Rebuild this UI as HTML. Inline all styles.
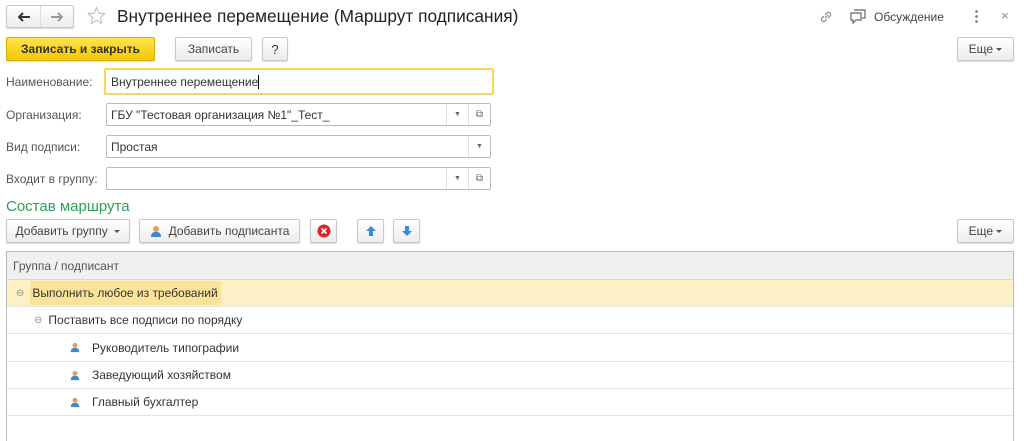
<!DOCTYPE html>
<html><head><meta charset="utf-8"><style>
*{box-sizing:border-box;margin:0;padding:0}
body{width:1024px;height:429px;background:#fff;font-family:"Liberation Sans",Arial,sans-serif;font-size:12px;color:#333;position:relative;overflow:hidden}
.a{position:absolute}
.btn{position:absolute;border:1px solid #c8c8c8;border-radius:2px;background:linear-gradient(#fff,#ececec);box-shadow:0 1px 1px rgba(0,0,0,.15);display:flex;align-items:center;justify-content:center;color:#444;font-size:12px}
.fld{position:absolute;border:1px solid #bbb;border-radius:2px;background:#fff;display:flex;align-items:center;padding-left:4px;font-size:12px;color:#333}
.lbl{position:absolute;color:#555;font-size:12px}
.dd{position:absolute;top:0;bottom:0;border-left:1px solid #ddd;width:22px;display:flex;align-items:center;justify-content:center;font-size:7px;color:#666}
.row{position:absolute;left:7px;width:1006px;border-bottom:1px solid #e4e4e4;display:flex;align-items:center;font-size:12px;color:#333}
.tri{display:inline-block;width:0;height:0;border-left:3px solid transparent;border-right:3px solid transparent;border-top:3px solid #555}
</style></head><body>
<div class="btn" style="left:6px;top:5px;width:68px;height:23px;justify-content:flex-start;padding:0">
 <span style="width:34px;display:flex;justify-content:center"><svg width="12" height="10"><path d="M1 5h11M5 1L1 5l4 4" fill="none" stroke="#333" stroke-width="2"/></svg></span><span style="width:1px;height:21px;background:#ddd"></span><span style="width:33px;display:flex;justify-content:center"><svg width="12" height="10"><path d="M0 5h11M7 1l4 4-4 4" fill="none" stroke="#999" stroke-width="2"/></svg></span>
</div>
<svg class="a" style="left:86px;top:6px" width="21" height="20" viewBox="0 0 24 24"><path d="M12 2l2.9 6.6 7.1.6-5.4 4.7 1.6 7-6.2-3.7-6.2 3.7 1.6-7L2 9.2l7.1-.6z" fill="none" stroke="#bbb" stroke-width="1.2"/></svg>
<div class="a" style="left:117px;top:6px;font-size:17.3px;color:#222">Внутреннее перемещение (Маршрут подписания)</div>
<svg class="a" style="left:818px;top:9px" width="16" height="16" viewBox="0 0 16 16"><path d="M7 9l3-3M6 7L4 9a2 2 0 003 3l2-2M10 9l2-2a2 2 0 00-3-3L7 6" fill="none" stroke="#888" stroke-width="1.2"/></svg>
<svg class="a" style="left:850px;top:9px" width="16" height="15" viewBox="0 0 16 15"><path d="M4 1h11v8h-3M1 4h10v7H6l-3 3v-3H1z" fill="none" stroke="#666" stroke-width="1.2"/></svg>
<div class="a" style="left:874px;top:10px;color:#444">Обсуждение</div>
<div class="a" style="left:975px;top:9px;width:3px;height:14px;background:radial-gradient(circle,#888 1.3px,transparent 1.5px) 0 0/3px 5px"></div>
<div class="a" style="left:1001px;top:8px;color:#888;font-size:13px">×</div>

<div class="btn" style="left:6px;top:37px;width:149px;height:24px;background:linear-gradient(#ffe34d,#f2c800);border-color:#d4ae00;color:#333;font-weight:bold">Записать и закрыть</div>
<div class="btn" style="left:175px;top:37px;width:77px;height:24px">Записать</div>
<div class="btn" style="left:262px;top:37px;width:26px;height:24px;font-size:13px;color:#333">?</div>
<div class="btn" style="left:957px;top:37px;width:57px;height:24px">Еще&nbsp;<span class="tri"></span></div>

<div class="lbl" style="left:6px;top:75px">Наименование:</div>
<div class="fld" style="left:104px;top:68px;width:390px;height:27px;border:2px solid #f5d85a;padding-left:5px">Внутреннее перемещение<span style="width:1px;height:14px;background:#000"></span></div>
<div class="lbl" style="left:6px;top:108px">Организация:</div>
<div class="fld" style="left:106px;top:103px;width:385px;height:23px">ГБУ "Тестовая организация №1"_Тест_<div class="dd" style="right:22px">▼</div><div class="dd" style="right:0;font-size:10px">⧉</div></div>
<div class="lbl" style="left:6px;top:140px">Вид подписи:</div>
<div class="fld" style="left:106px;top:135px;width:385px;height:23px">Простая<div class="dd" style="right:0">▼</div></div>
<div class="lbl" style="left:6px;top:172px">Входит в группу:</div>
<div class="fld" style="left:106px;top:167px;width:385px;height:23px"><div class="dd" style="right:22px">▼</div><div class="dd" style="right:0;font-size:10px">⧉</div></div>

<div class="a" style="left:6px;top:198px;font-size:15px;color:#2aa05a">Состав маршрута</div>
<div class="btn" style="left:6px;top:219px;width:124px;height:24px">Добавить группу&nbsp;&nbsp;<span class="tri"></span></div>
<div class="btn" style="left:139px;top:219px;width:161px;height:24px"><svg width="12" height="13" viewBox="0 0 12 13" style="margin-right:7px"><circle cx="6" cy="4" r="3" fill="#e0a060"/><path d="M1 12c0-4 2-5 5-5s5 1 5 5z" fill="#3a8ad0"/></svg>Добавить подписанта</div>
<div class="btn" style="left:310px;top:219px;width:27px;height:24px"><svg width="14" height="14"><circle cx="7" cy="7" r="6.5" fill="#d8262b"/><path d="M4.5 4.5l5 5M9.5 4.5l-5 5" stroke="#fff" stroke-width="1.6"/></svg></div>
<div class="btn" style="left:357px;top:219px;width:27px;height:24px"><svg width="12" height="12"><path d="M6 1l5 5H8v5H4V6H1z" fill="#3a8ad8"/></svg></div>
<div class="btn" style="left:393px;top:219px;width:27px;height:24px"><svg width="12" height="12"><path d="M6 11l5-5H8V1H4v5H1z" fill="#3a8ad8"/></svg></div>
<div class="btn" style="left:957px;top:219px;width:57px;height:24px">Еще&nbsp;<span class="tri"></span></div>

<div class="a" style="left:6px;top:251px;width:1008px;height:190px;border:1px solid #bbb;border-bottom:none"></div>
<div class="row" style="top:252px;height:28px;background:#f0f0f0;border-bottom:1px solid #d8d8d8;padding-left:6px;color:#555">Группа / подписант</div>
<div class="row" style="top:280px;height:27px;background:#fcf0c6;padding-left:9px"><span style="color:#888;font-size:10px;margin-right:6px">⊖</span><span style="background:#fbe39a;padding:5px 3px 5px 2px">Выполнить любое из требований</span></div>
<div class="row" style="top:307px;height:27px;padding-left:27px"><span style="color:#888;font-size:10px;margin-right:6px">⊖</span>Поставить все подписи по порядку</div>
<div class="row" style="top:334px;height:28px;padding-left:63px"><svg width="10" height="11" viewBox="0 0 12 13" style="margin-right:12px"><circle cx="6" cy="4" r="3" fill="#e0a060"/><path d="M1 12c0-4 2-5 5-5s5 1 5 5z" fill="#3a8ad0"/></svg>Руководитель типографии</div>
<div class="row" style="top:362px;height:27px;padding-left:63px"><svg width="10" height="11" viewBox="0 0 12 13" style="margin-right:12px"><circle cx="6" cy="4" r="3" fill="#e0a060"/><path d="M1 12c0-4 2-5 5-5s5 1 5 5z" fill="#3a8ad0"/></svg>Заведующий хозяйством</div>
<div class="row" style="top:389px;height:27px;padding-left:63px"><svg width="10" height="11" viewBox="0 0 12 13" style="margin-right:12px"><circle cx="6" cy="4" r="3" fill="#e0a060"/><path d="M1 12c0-4 2-5 5-5s5 1 5 5z" fill="#3a8ad0"/></svg>Главный бухгалтер</div>
</body></html>
